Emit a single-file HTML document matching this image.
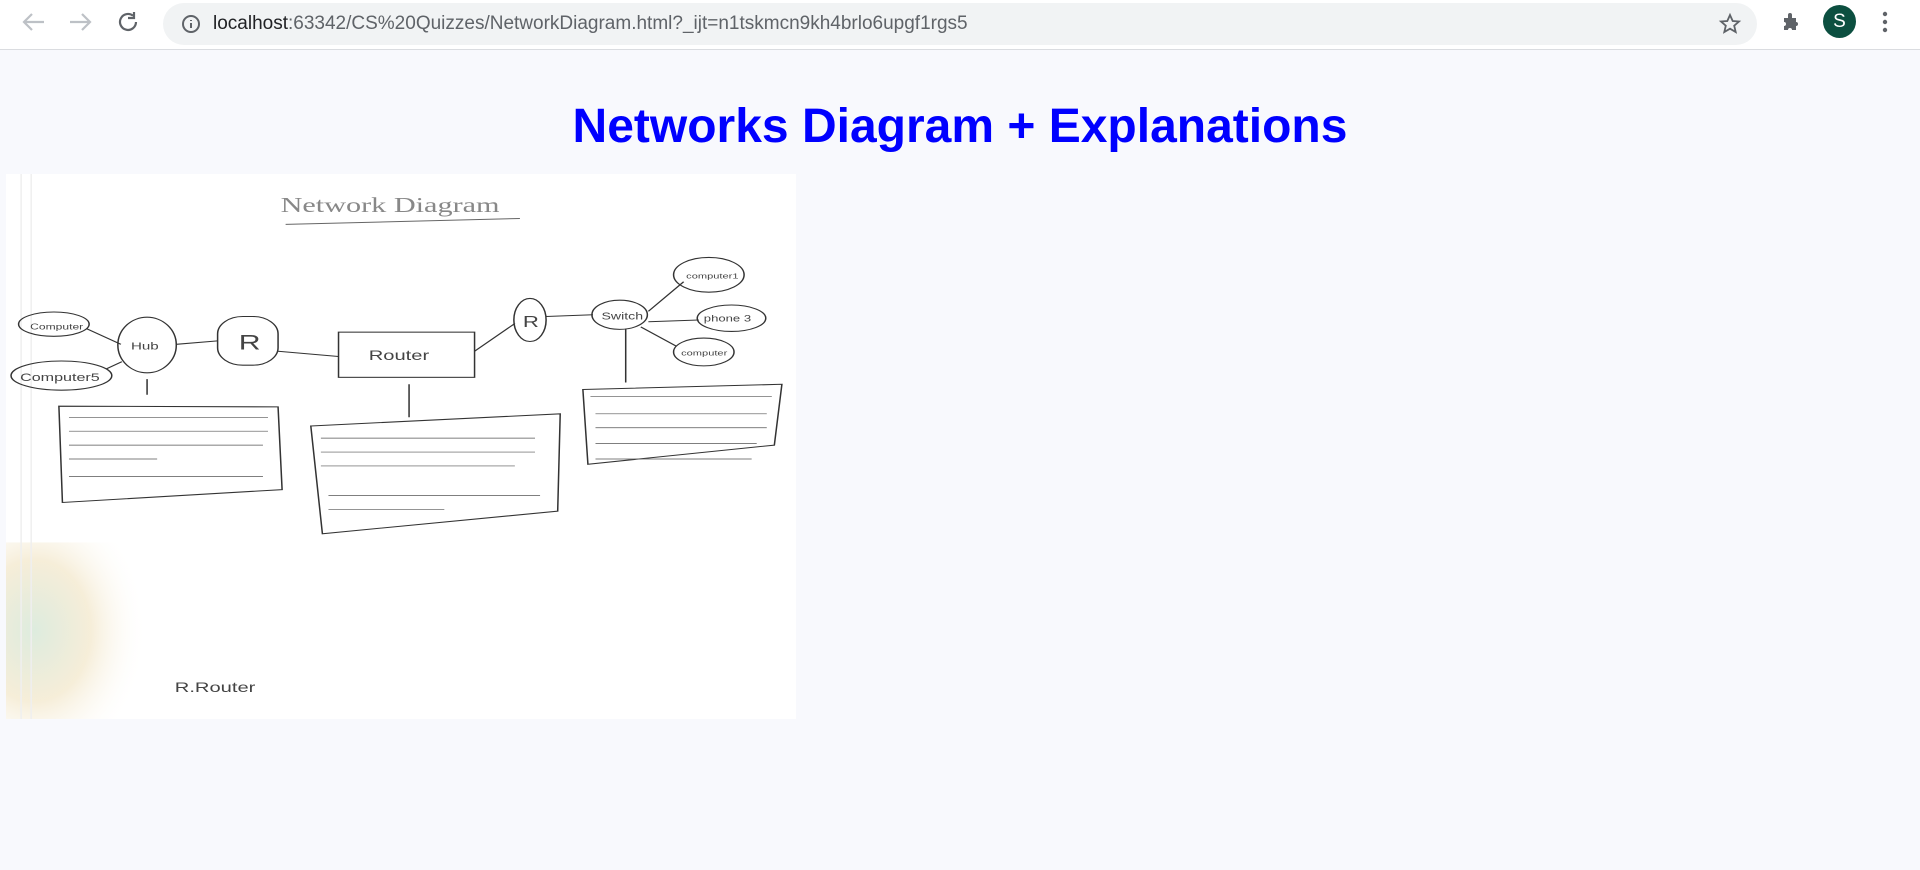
<!DOCTYPE html>
<html><head><meta charset="utf-8"><style>
body{margin:0;width:1920px;height:870px;background:#f8f9fd;font-family:"Liberation Sans",Arial,sans-serif;overflow:hidden;position:relative}
.bar{position:absolute;left:0;top:0;width:1920px;height:49px;background:#fff;border-bottom:1px solid #dadce0}
.url{position:absolute;left:163px;top:3px;width:1594px;height:42px;border-radius:21px;background:#f1f3f4}
.url span{position:absolute;left:50px;top:10px;font-size:19px;color:#5f6368;white-space:nowrap}
.url b{font-weight:normal;color:#202124}
h1{position:absolute;left:0;width:1920px;top:99px;margin:0;text-align:center;color:#0000ff;font-size:48px;font-weight:bold}
.img{position:absolute;left:6px;top:174px;width:790px;height:545px;background:#fff}
</style></head><body>
<div class="bar">
<svg width="160" height="49" style="position:absolute;left:0;top:0" fill="none" stroke-width="2.2">
<path d="M44 22H24M32 14l-8 8 8 8" stroke="#bdc1c6"/>
<path d="M70 22h20M82 14l8 8-8 8" stroke="#bdc1c6"/>
<path d="M136 22a8 8 0 1 1-3-6.3" stroke="#5f6368"/><path d="M134 12v6h-6" stroke="#5f6368"/>
</svg>
<div class="url">
<svg width="24" height="24" style="position:absolute;left:16px;top:9px" fill="none" stroke="#5f6368" stroke-width="2"><circle cx="12" cy="12" r="8"/><path d="M12 11v5M12 8v1"/></svg>
<span><b>localhost</b>:63342/CS%20Quizzes/NetworkDiagram.html?_ijt=n1tskmcn9kh4brlo6upgf1rgs5</span>
<svg width="24" height="24" style="position:absolute;left:1555px;top:9px" fill="none" stroke="#5f6368" stroke-width="1.8"><path d="M12 3l2.7 6 6.3.5-4.8 4.2 1.5 6.3L12 16.7 6.3 20l1.5-6.3L3 9.5 9.3 9z"/></svg>
</div>
<svg width="24" height="24" style="position:absolute;left:1779px;top:10px" fill="#5f6368"><path d="M5 8h4V5a2 2 0 0 1 4 0v3h4v4a2 2 0 0 1 0 4v4h-4a2 2 0 0 0-4 0H5v-4a2 2 0 0 0 0-4z"/></svg>
<div style="position:absolute;left:1823px;top:5px;width:33px;height:33px;border-radius:50%;background:#0c4f40;color:#fff;font-size:19px;text-align:center;line-height:33px">S</div>
<svg width="10" height="30" style="position:absolute;left:1880px;top:8px" fill="#5f6368"><circle cx="5" cy="6" r="2.2"/><circle cx="5" cy="14" r="2.2"/><circle cx="5" cy="22" r="2.2"/></svg>
</div>
<h1>Networks Diagram + Explanations</h1>
<div class="img">
<svg width="790" height="545" viewBox="0 0 1568 1568" preserveAspectRatio="none" fill="none" stroke="#333" stroke-width="3">
<defs><radialGradient id="g" cx=".2" cy=".5" r=".8"><stop offset="0" stop-color="#cfe3d0"/><stop offset=".5" stop-color="#f2e6c8"/><stop offset="1" stop-color="#fff" stop-opacity="0"/></radialGradient></defs>
<rect x="0" y="1060" width="280" height="508" fill="url(#g)" stroke="none" opacity=".7"/>
<path d="M50 0V1568M30 0V1568" stroke="#efefef"/>
<text x="545" y="110" font-size="60" fill="#888" stroke="none" font-family="Liberation Serif">Network Diagram</text>
<path d="M555 145L1020 128" stroke="#666"/>
<ellipse cx="95" cy="432" rx="70" ry="35"/><ellipse cx="110" cy="580" rx="100" ry="42"/>
<ellipse cx="280" cy="492" rx="58" ry="80"/><rect x="420" y="410" width="120" height="140" rx="50"/>
<rect x="660" y="455" width="270" height="130"/><ellipse cx="1040" cy="420" rx="32" ry="62"/>
<ellipse cx="1218" cy="405" rx="55" ry="42"/><ellipse cx="1395" cy="290" rx="70" ry="50"/>
<ellipse cx="1440" cy="415" rx="68" ry="38"/><ellipse cx="1385" cy="512" rx="60" ry="40"/>
<g stroke="none" fill="#444" font-family="Liberation Sans">
<text x="48" y="448" font-size="24">Computer</text><text x="28" y="595" font-size="32">Computer5</text>
<text x="248" y="505" font-size="30">Hub</text><text x="462" y="505" font-size="60">R</text>
<text x="720" y="535" font-size="40">Router</text><text x="1026" y="440" font-size="44">R</text>
<text x="1182" y="418" font-size="28">Switch</text><text x="1350" y="300" font-size="22">computer1</text>
<text x="1385" y="425" font-size="26">phone 3</text><text x="1340" y="522" font-size="22">computer</text>
<text x="335" y="1490" font-size="40">R.Router</text></g>
<path d="M160 445L228 490M200 560L230 540M338 490L420 480M540 510L660 525M930 510L1010 430M1072 410L1165 405M1275 395L1345 310M1275 425L1375 420M1260 440L1330 495M280 590V635M800 605V700M1230 445V600"/>
<path d="M105 668L540 670 548 908 112 945z"/><path d="M605 725L1100 690 1095 970 628 1035z"/><path d="M1145 620L1540 605 1525 780 1155 835z"/>
<g stroke="#555" stroke-width="2"><path d="M125 700H520M125 740H520M125 780H510M125 820H300M125 870H510M625 760H1050M625 800H1050M625 840H1010M640 925H1060M640 965H870M1160 640H1520M1170 690H1510M1170 730H1510M1170 775H1490M1170 820H1480"/></g>
</svg>
</div>
</body></html>
